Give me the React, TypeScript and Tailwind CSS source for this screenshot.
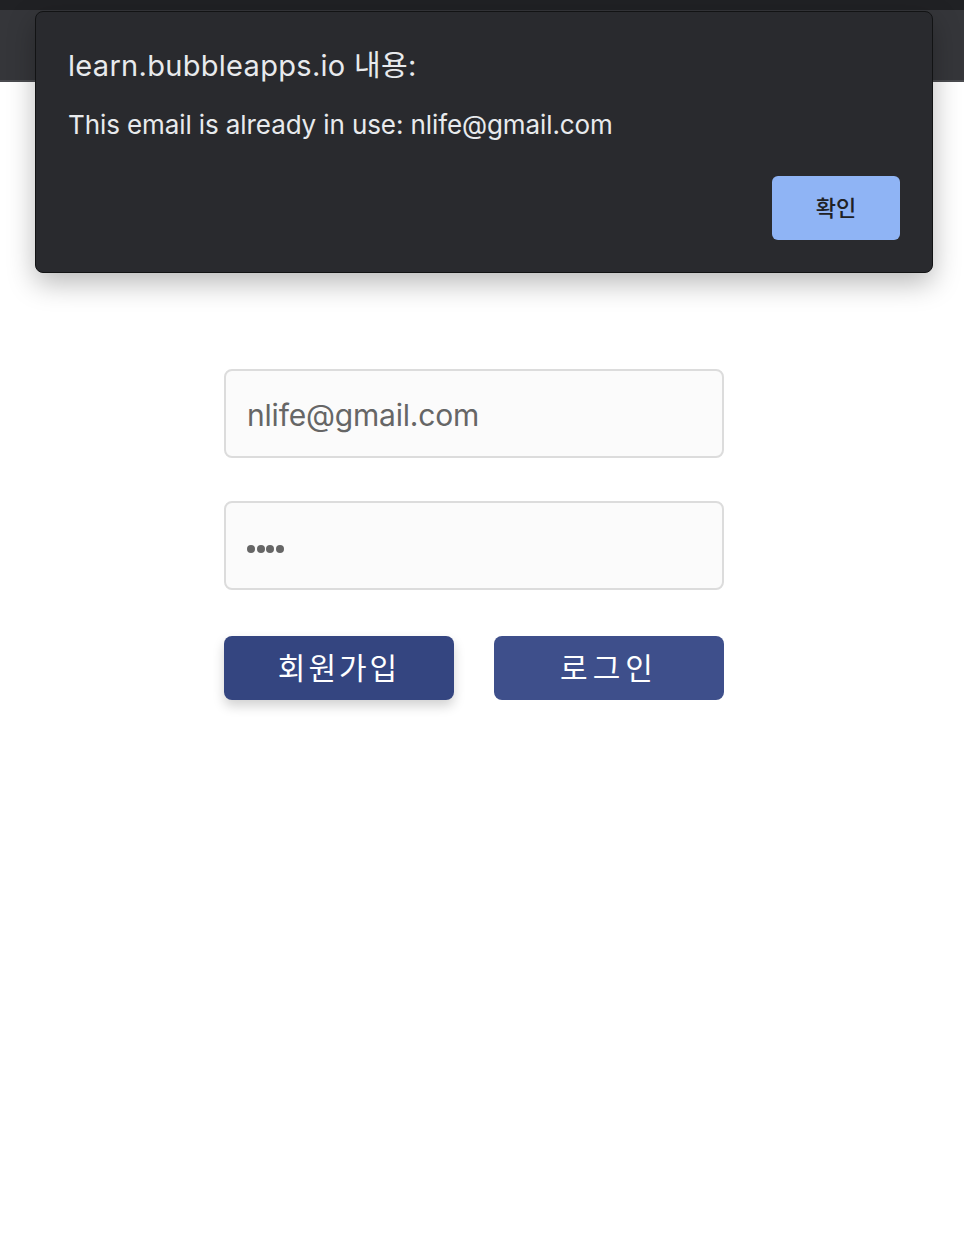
import { useState } from "react";

const font = {
  fontFamily: '"Inter", "Noto Sans CJK KR", sans-serif',
};

function AlertDialog() {
  return (
    <div
      className="absolute left-[35px] top-[11px] h-[262px] w-[898px] rounded-[8px] border border-[#121314] bg-[#292a2e] shadow-[0_10px_28px_rgba(0,0,0,0.28)]"
      style={font}
    >
      <div className="px-[32px] pt-[35px]">
        <h2 className="text-[29px] leading-[38px] tracking-[0.3px] text-[#e8eaed]">
          learn.bubbleapps.io 내용:
        </h2>
        <p className="mt-[23px] text-[26px] leading-[34px] tracking-[-0.1px] text-[#e8eaed]">
          This email is already in use: nlife@gmail.com
        </p>
      </div>
      <div className="mt-[34px] flex justify-end pr-[32px]">
        <button className="flex h-[64px] w-[128px] items-center justify-center rounded-[6px] bg-[#8fb4f5] text-[22px] font-medium text-[#202124]">
          확인
        </button>
      </div>
    </div>
  );
}

function App() {
  const [email] = useState("nlife@gmail.com");

  return (
    <div className="relative min-h-[1234px] bg-white" style={font}>
      {/* browser chrome */}
      <div className="h-[10px] bg-[#202124]" />
      <div className="h-[72px] border-b-2 border-[#4a4b4f] bg-[#35363a]" />

      <main className="pl-[224px] pt-[287px]">
        <div className="flex w-[500px] flex-col">
          <div className="flex h-[89px] items-center rounded-[8px] border-2 border-[#dcdcdc] bg-[#fbfbfb] px-[21px]">
            <span className="mt-[4px] text-[30px] tracking-[-0.2px] text-[#666666]">{email}</span>
          </div>

          <div className="mt-[43px] flex h-[89px] items-center rounded-[8px] border-2 border-[#dcdcdc] bg-[#fbfbfb] px-[21px]">
            <div className="mt-[6px] flex gap-[1.5px]">
              <span className="h-[8px] w-[8px] rounded-full bg-[#666666]" />
              <span className="h-[8px] w-[8px] rounded-full bg-[#666666]" />
              <span className="h-[8px] w-[8px] rounded-full bg-[#666666]" />
              <span className="h-[8px] w-[8px] rounded-full bg-[#666666]" />
            </div>
          </div>

          <div className="mt-[46px] flex justify-between">
            <button className="flex h-[64px] w-[230px] items-center justify-center rounded-[8px] bg-[#344580] text-[30px] tracking-[3px] text-white shadow-[0_6px_12px_rgba(0,0,0,0.18)]">
              회원가입
            </button>
            <button className="flex h-[64px] w-[230px] items-center justify-center rounded-[8px] bg-[#3e4f8b] text-[30px] tracking-[5px] text-white">
              로그인
            </button>
          </div>
        </div>
      </main>

      <AlertDialog />
    </div>
  );
}

export default App;
